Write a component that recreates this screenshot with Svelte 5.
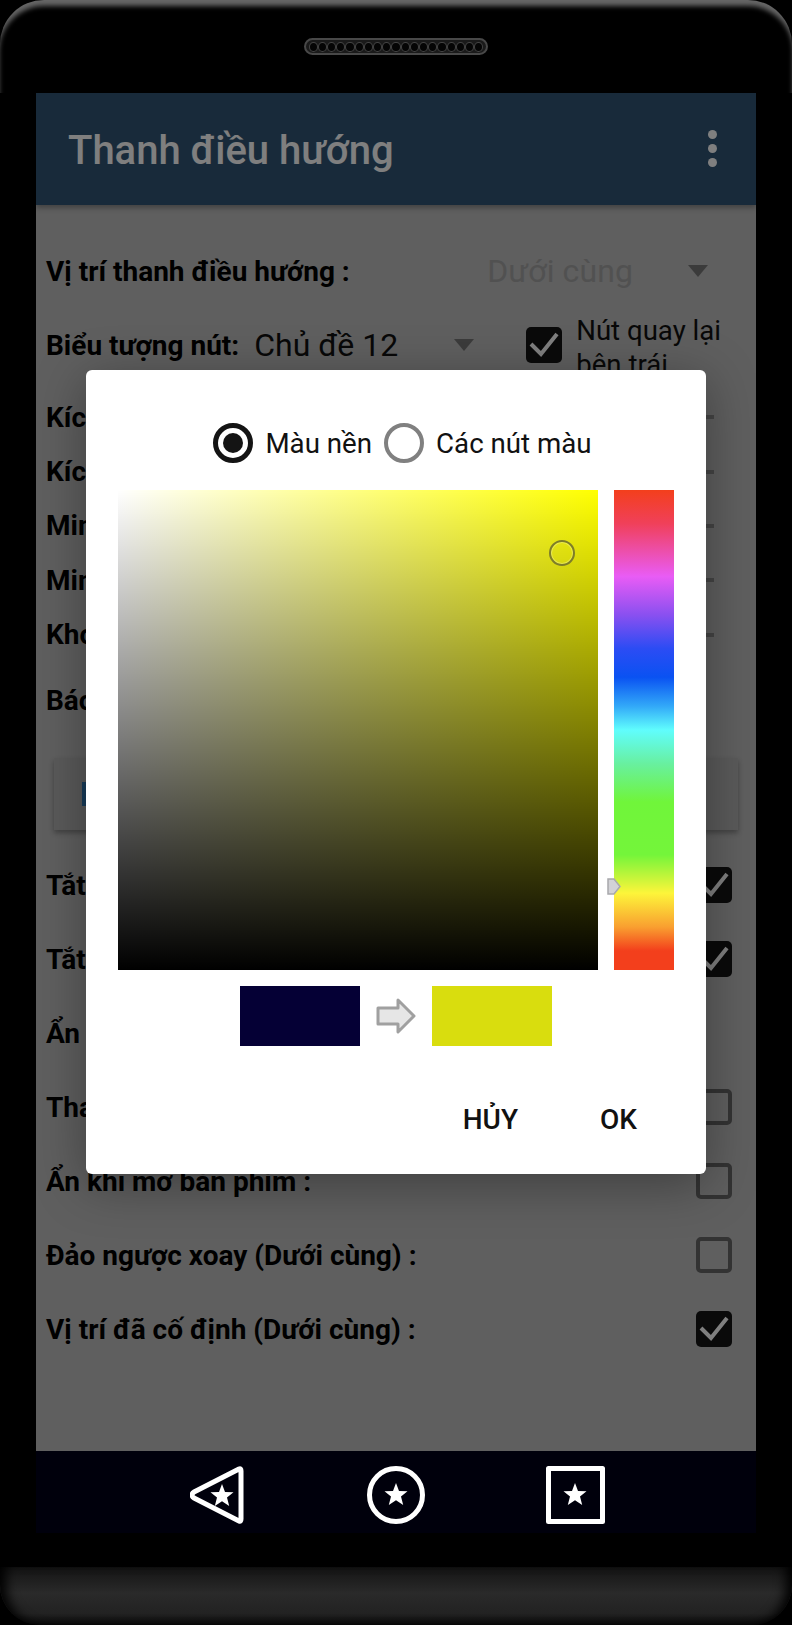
<script>
  const sliders = ['Kíc', 'Kíc', 'Min', 'Min', 'Kho'];
  const toggles = [
    { label: 'Tắt', checked: true },
    { label: 'Tắt', checked: true },
    { label: 'Ẩn', hidden: true },
    { label: 'Tha', checked: false },
    { label: 'Ẩn khi mở bàn phím :', checked: false },
    { label: 'Đảo ngược xoay (Dưới cùng) :', checked: false },
    { label: 'Vị trí đã cố định (Dưới cùng) :', checked: true }
  ];
  const holes = Array.from({ length: 19 }, (_, i) => i);
  const star = 'M0 -12 L3 -4 L11.5 -3.8 L5 1.6 L7.2 10 L0 5.2 L-7.2 10 L-5 1.6 L-11.5 -3.8 L-3 -4 Z';
</script>

<div class="phone">
  <div class="bezel-top">
    <div class="speaker">
      {#each holes as h}
        <span class="hole"></span>
      {/each}
    </div>
  </div>

  <div class="screen">
    <header class="appbar">
      <h1>Thanh điều hướng</h1>
      <div class="dots"><i></i><i></i><i></i></div>
    </header>

    <div class="content">
      <div class="row first">
        <span class="label">Vị trí thanh điều hướng :</span>
        <div class="select disabled">
          <span>Dưới cùng</span>
          <b class="caret"></b>
        </div>
      </div>

      <div class="row">
        <span class="label">Biểu tượng nút:</span>
        <div class="select theme">
          <span>Chủ đề 12</span>
          <b class="caret"></b>
        </div>
        <div class="box on left">
          <svg viewBox="0 0 36 36" width="36" height="36"><path d="M5 17 L15 27 L31 7" /></svg>
        </div>
        <div class="back-left">Nút quay lại<br />bên trái</div>
      </div>

      <div class="sliders">
        {#each sliders as s}
          <div class="slider">
            <span class="label">{s}</span>
            <i class="track"></i>
          </div>
        {/each}
      </div>

      <div class="row"><span class="label">Báo</span></div>

      <div class="card"><i class="blue"></i></div>

      <div class="toggles">
        {#each toggles as t}
          <div class="row">
            <span class="label">{t.label}</span>
            {#if !t.hidden}
              <div class="box" class:on={t.checked}>
                {#if t.checked}
                  <svg viewBox="0 0 36 36" width="36" height="36"><path d="M5 17 L15 27 L31 7" /></svg>
                {/if}
              </div>
            {/if}
          </div>
        {/each}
      </div>
    </div>

    <div class="scrim">
      <div class="dialog">
        <div class="radios">
          <span class="radio on"><i></i></span>
          <span class="radio-text">Màu nền</span>
          <span class="radio"></span>
          <span class="radio-text">Các nút màu</span>
        </div>

        <div class="picker">
          <div class="square">
            <span class="cursor"></span>
          </div>
          <div class="hue">
            <svg class="hue-thumb" viewBox="0 0 14 17" width="14" height="17">
              <path d="M1 1 H7 L13 8.5 L7 16 H1 Z" fill="#d2d2d6" stroke="#a8a8ac" stroke-width="1.5" />
            </svg>
          </div>
        </div>

        <div class="swatches">
          <div class="swatch old"></div>
          <svg viewBox="0 0 40 36" width="40" height="36">
            <path d="M2 10 H22 V2 L38 18 L22 34 V26 H2 Z" fill="#e6e6e6" stroke="#a0a0a0" stroke-width="3" stroke-linejoin="round" />
          </svg>
          <div class="swatch new"></div>
        </div>

        <div class="actions">
          <span class="cancel">HỦY</span>
          <span>OK</span>
        </div>
      </div>
    </div>
  </div>

  <nav class="navbar">
    <svg viewBox="0 0 54 58" width="54" height="58" class="nav-back">
      <path d="M49 3 Q51 2 51 5 V53 Q51 56 49 55 L4 32 Q0 29 4 26 Z" class="outline" />
      <path d={star} transform="translate(32 30)" class="star" />
    </svg>
    <svg viewBox="0 0 58 58" width="58" height="58" class="nav-home">
      <circle cx="29" cy="29" r="26.5" class="outline" />
      <path d={star} transform="translate(29 29)" class="star" />
    </svg>
    <svg viewBox="0 0 59 58" width="59" height="58" class="nav-recent">
      <rect x="2.5" y="2.5" width="54" height="53" class="outline" />
      <path d={star} transform="translate(29 29)" class="star" />
    </svg>
  </nav>

  <div class="bezel-gap"></div>
  <div class="bezel-bottom"></div>
</div>

<style>
  :global(body) {
    margin: 0;
    background: #000;
  }

  .phone {
    width: 792px;
    height: 1625px;
    background: #000;
    overflow: hidden;
    font-family: Roboto, "Noto Sans", sans-serif;
    display: flex;
    flex-direction: column;
  }

  .bezel-top {
    height: 93px;
    flex: none;
    border-radius: 44px 44px 0 0;
    box-shadow: inset 0 7px 5px -1px #666;
    display: flex;
    justify-content: center;
    align-items: flex-start;
  }

  .speaker {
    margin-top: 38px;
    width: 184px;
    height: 17px;
    box-sizing: border-box;
    border: 2px solid #484848;
    border-radius: 9px;
    background: #1a1a1a;
    display: flex;
    justify-content: center;
    align-items: center;
  }

  .hole {
    width: 9.2px;
    height: 10px;
    box-sizing: border-box;
    border: 1px solid #444;
    border-radius: 50%;
    background: #050505;
  }

  .screen {
    position: relative;
    margin: 0 36px;
    height: 1358px;
    flex: none;
    background: #bebebe;
    display: flex;
    flex-direction: column;
  }

  .appbar {
    height: 112px;
    flex: none;
    background: #305574;
    box-shadow: 0 3px 5px rgba(0, 0, 0, 0.3);
    display: flex;
    align-items: center;
    justify-content: space-between;
    padding: 0 39px 0 32px;
  }

  h1 {
    margin: 0;
    font-size: 40px;
    font-weight: 500;
    color: #fff;
    padding-top: 2px;
  }

  .dots {
    display: flex;
    flex-direction: column;
    gap: 5px;
    margin-top: -2px;
  }

  .dots i {
    width: 9px;
    height: 9px;
    border-radius: 50%;
    background: #fff;
  }

  .content {
    padding-top: 29px;
  }

  .row {
    height: 74px;
    display: flex;
    align-items: center;
    padding: 0 24px 0 10px;
  }

  .label {
    font-size: 28px;
    font-weight: 700;
    color: #000;
    white-space: nowrap;
  }

  .toggles .label {
    padding-top: 2px;
  }

  .select {
    display: flex;
    align-items: center;
    font-size: 32px;
    color: #111;
  }

  .select.disabled {
    margin-left: auto;
    margin-right: 24px;
    color: #a3a3a3;
  }

  .select.disabled span {
    margin-right: 55px;
    letter-spacing: 0.1px;
  }

  .select.theme {
    margin-left: 15px;
  }

  .select.theme span {
    margin-right: 56px;
  }

  .caret {
    width: 0;
    height: 0;
    border-left: 10px solid transparent;
    border-right: 10px solid transparent;
    border-top: 12px solid #777;
  }

  .box {
    width: 36px;
    height: 36px;
    flex: none;
    box-sizing: border-box;
    margin-left: auto;
    border: 4px solid #666;
    border-radius: 5px;
  }

  .box.on {
    border: 0;
    background: #141414;
  }

  .box.left {
    margin-left: 52px;
  }

  .box svg {
    display: block;
  }

  .box path {
    fill: none;
    stroke: #fff;
    stroke-width: 4;
  }

  .back-left {
    margin-left: 14px;
    font-size: 27.6px;
    line-height: 34px;
    color: #111;
    white-space: nowrap;
    align-self: flex-start;
    padding-top: 6px;
  }

  .sliders {
    padding: 8px 0 2px;
  }

  .slider {
    height: 54.4px;
    display: flex;
    align-items: center;
    padding: 0 42px 0 10px;
    justify-content: space-between;
  }

  .track {
    width: 40px;
    height: 4px;
    background: #8a8a8a;
  }

  .card {
    height: 72px;
    margin: 20px 18px 18px;
    background: #b4b4b4;
    box-shadow: 0 3px 5px rgba(0, 0, 0, 0.3);
    display: flex;
    align-items: center;
    padding-left: 28px;
  }

  .blue {
    width: 20px;
    height: 24px;
    background: #2f78b5;
  }

  .scrim {
    position: absolute;
    inset: 0;
    background: rgba(0, 0, 0, 0.5);
    display: flex;
    align-items: center;
    justify-content: center;
  }

  .dialog {
    width: 620px;
    height: 804px;
    box-sizing: border-box;
    padding-top: 53px;
    background: #fff;
    border-radius: 6px;
    box-shadow: 0 10px 50px rgba(0, 0, 0, 0.35);
    display: flex;
    flex-direction: column;
  }

  .radios {
    display: flex;
    align-items: center;
    justify-content: center;
    height: 40px;
    padding-left: 13px;
    color: #111;
    font-size: 27.7px;
  }

  .radio {
    width: 40px;
    height: 40px;
    box-sizing: border-box;
    border: 4px solid #808080;
    border-radius: 50%;
    display: flex;
    align-items: center;
    justify-content: center;
  }

  .radio.on {
    border: 5px solid #141414;
  }

  .radio.on i {
    width: 20px;
    height: 20px;
    border-radius: 50%;
    background: #141414;
  }

  .radio-text {
    margin-left: 12px;
    margin-right: 12px;
    white-space: nowrap;
  }

  .radio-text:last-child {
    margin-right: 0;
  }

  .picker {
    margin: 27px 0 0 32px;
    display: flex;
    gap: 16px;
  }

  .square {
    position: relative;
    width: 480px;
    height: 480px;
    background:
      linear-gradient(to top, #000, rgba(0, 0, 0, 0)),
      linear-gradient(to right, #fff, #ff0);
  }

  .cursor {
    position: absolute;
    left: 431px;
    top: 50px;
    width: 26px;
    height: 26px;
    box-sizing: border-box;
    border: 2px solid #7d7d2a;
    border-radius: 50%;
    box-shadow: inset 0 0 0 1px rgba(255, 255, 200, 0.35);
  }

  .hue {
    position: relative;
    width: 60px;
    height: 480px;
    background: linear-gradient(
      to bottom,
      #f33f1c 0%,
      #f0405a 7%,
      #e95cf5 18%,
      #8a50f0 26%,
      #2c4cf4 33%,
      #0a52f2 39%,
      #32a8f8 45%,
      #60fdfd 50%,
      #68f0a0 57%,
      #70f53a 65%,
      #74f53a 76%,
      #fdf53a 84%,
      #f9a030 91%,
      #f33f1c 96%,
      #f33f1c 100%
    );
  }

  .hue-thumb {
    position: absolute;
    left: -7px;
    top: 388px;
  }

  .swatches {
    margin-top: 16px;
    padding-left: 154px;
    display: flex;
    align-items: center;
    gap: 16px;
  }

  .swatch {
    width: 120px;
    height: 60px;
  }

  .old {
    background: #050035;
  }

  .new {
    background: #d9dd0e;
  }

  .actions {
    margin-top: 57px;
    display: flex;
    justify-content: flex-end;
    gap: 82px;
    padding-right: 69px;
    font-size: 28px;
    font-weight: 500;
    color: #111;
  }

  .navbar {
    height: 82px;
    flex: none;
    margin: 0 36px;
    background: #00000c;
    display: flex;
    align-items: flex-start;
    padding-top: 15px;
    padding-left: 154px;
    box-sizing: border-box;
  }

  .nav-home {
    margin-left: 123px;
  }

  .nav-recent {
    margin-left: 121px;
  }

  .outline {
    fill: none;
    stroke: #fff;
    stroke-width: 5;
    stroke-linejoin: round;
  }

  .star {
    fill: #fff;
  }

  .bezel-gap {
    height: 34px;
    flex: none;
  }

  .bezel-bottom {
    height: 58px;
    flex: none;
    background: linear-gradient(to bottom, #141414, #2a2a2a 45%, #222 80%, #0a0a0a);
    border-radius: 0 0 40px 40px;
    box-shadow: inset 12px 0 12px -6px #000, inset -12px 0 12px -6px #000;
  }
</style>
